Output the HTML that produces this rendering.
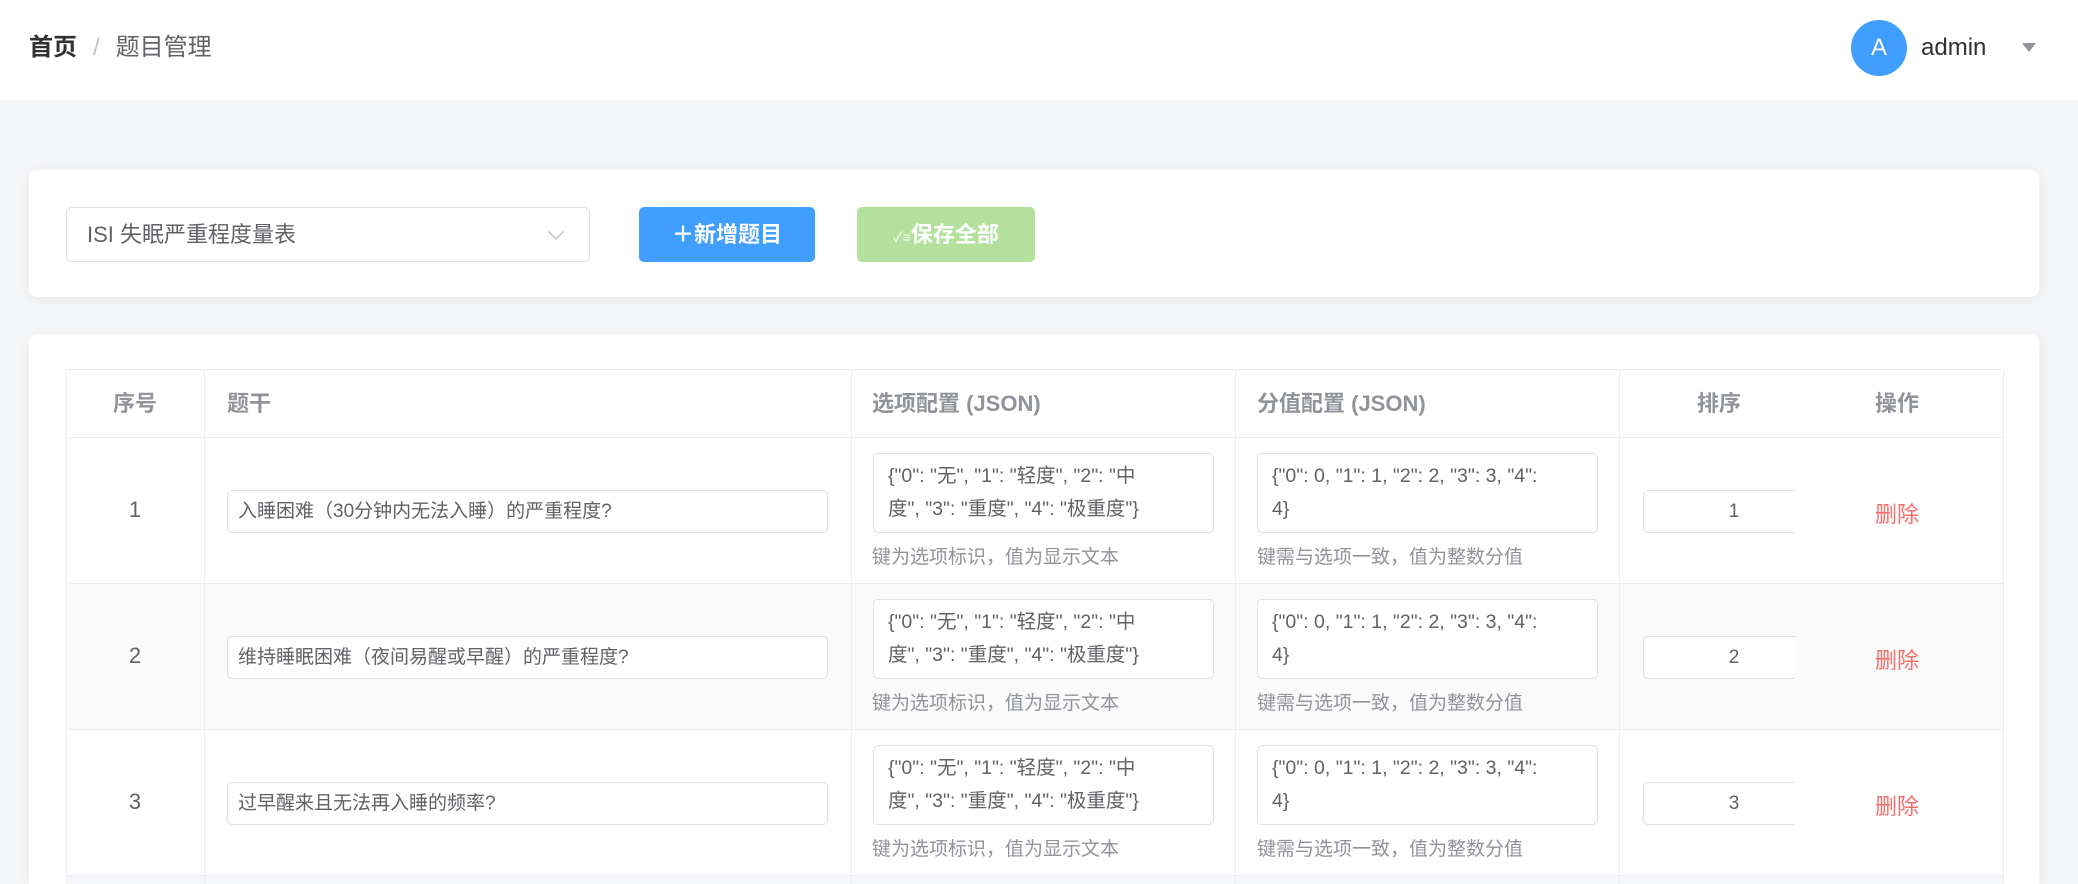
<!DOCTYPE html>
<html style="width:2078px;height:884px;overflow:hidden"><head><meta charset="utf-8"><style>
*{box-sizing:border-box;margin:0;padding:0}
body{width:2078px;height:884px;overflow:hidden;background:#f4f5f7;font-family:"Liberation Sans","Noto Sans CJK SC",sans-serif;color:#606266;position:relative}
.a{position:absolute}
.hdr{left:0;top:0;width:2078px;height:100px;background:#fff}
.card{background:#fff;border-radius:8px;box-shadow:0 2px 12px rgba(0,0,0,.06)}
.inp{position:absolute;border:1px solid #dcdfe6;border-radius:5px;background:#fff;font-size:19px;color:#606266}
.ta{padding:6px 14px;line-height:33px;font-size:19.5px;white-space:pre}
.hint{position:absolute;font-size:19px;color:#909399}
.th{position:absolute;top:370px;height:67px;line-height:67px;font-size:22px;font-weight:bold;color:#909399}
.vl{position:absolute;width:1px;background:#ebeef5;top:370px;height:514px}
.hl{position:absolute;height:1px;background:#ebeef5;left:66px;width:1938px}
.del{position:absolute;font-size:22px;color:#f56c6c;width:100px;text-align:center;left:1847px}
.num{position:absolute;font-size:22px;color:#606266;width:138px;text-align:center;left:66px}
</style></head><body>
<div class="a hdr"></div>
<div class="a" style="left:29px;top:32px;font-size:24px;line-height:32px"><b style="color:#303133">首页</b><span style="color:#c0c4cc;margin:0 16px">/</span><span style="color:#606266">题目管理</span></div>
<div class="a" style="left:1851px;top:20px;width:56px;height:56px;border-radius:50%;background:#409eff;color:#fff;font-size:24px;line-height:56px;text-align:center">A</div>
<div class="a" style="left:1921px;top:32px;font-size:24px;line-height:32px;color:#303133">admin</div>
<div class="a" style="left:2022px;top:43px;width:0;height:0;border-left:7px solid transparent;border-right:7px solid transparent;border-top:9px solid #909399"></div>

<div class="a card" style="left:29px;top:170px;width:2010px;height:127px"></div>
<div class="inp" style="left:66px;top:207px;width:524px;height:55px;line-height:53px;padding-left:20px;font-size:22px">ISI 失眠严重程度量表</div>
<svg class="a" style="left:546px;top:228px" width="20" height="14"><path d="M2 3 L10 11 L18 3" fill="none" stroke="#c0c4cc" stroke-width="1.5"/></svg>
<div class="a" style="left:639px;top:207px;width:176px;height:55px;background:#409eff;border-radius:5px;color:#fff;font-size:22px;font-weight:bold;line-height:55px;text-align:center">＋新增题目</div>
<div class="a" style="left:857px;top:207px;width:178px;height:55px;background:#b3e19d;border-radius:5px;color:#fff;font-size:22px;font-weight:bold;line-height:55px;text-align:center"><span style="font-size:14px;font-weight:normal">✓≡</span>保存全部</div>

<div class="a card" style="left:29px;top:334px;width:2010px;height:550px;border-radius:8px 8px 0 0"></div>
<div class="a" style="left:66px;top:369px;width:1938px;height:515px;border:1px solid #ebeef5;border-bottom:none"></div>
<div class="a" style="left:67px;top:583px;width:1936px;height:146px;background:#fafafa"></div>
<div class="a" style="left:67px;top:875px;width:1936px;height:9px;background:#f5f7fa"></div>
<div class="hl" style="top:437px"></div><div class="hl" style="top:583px"></div><div class="hl" style="top:729px"></div><div class="hl" style="top:875px"></div>
<div class="vl" style="left:204px"></div><div class="vl" style="left:851px"></div><div class="vl" style="left:1235px"></div><div class="vl" style="left:1619px"></div>
<div class="th" style="left:66px;width:138px;text-align:center">序号</div>
<div class="th" style="left:227px">题干</div>
<div class="th" style="left:872px">选项配置 (JSON)</div>
<div class="th" style="left:1257px">分值配置 (JSON)</div>
<div class="th" style="left:1619px;width:200px;text-align:center">排序</div>
<div class="th" style="left:1847px;width:100px;text-align:center">操作</div>

<div class="num" style="top:497px">1</div>
<div class="inp" style="left:227px;top:490px;width:601px;height:43px;line-height:41px;padding-left:10px">入睡困难（30分钟内无法入睡）的严重程度?</div>
<div class="inp ta" style="left:873px;top:453px;width:341px;height:80px">{"0": "无", "1": "轻度", "2": "中
度", "3": "重度", "4": "极重度"}</div>
<div class="hint" style="left:872px;top:542px">键为选项标识，值为显示文本</div>
<div class="inp ta" style="left:1257px;top:453px;width:341px;height:80px">{"0": 0, "1": 1, "2": 2, "3": 3, "4":
4}</div>
<div class="hint" style="left:1257px;top:542px">键需与选项一致，值为整数分值</div>
<div class="inp" style="left:1643px;top:490px;width:170px;height:43px;line-height:41px;clip-path:inset(0 18px 0 0)"><div style="width:180px;text-align:center">1</div></div>
<div class="del" style="top:497px">删除</div>

<div class="num" style="top:643px">2</div>
<div class="inp" style="left:227px;top:636px;width:601px;height:43px;line-height:41px;padding-left:10px">维持睡眠困难（夜间易醒或早醒）的严重程度?</div>
<div class="inp ta" style="left:873px;top:599px;width:341px;height:80px">{"0": "无", "1": "轻度", "2": "中
度", "3": "重度", "4": "极重度"}</div>
<div class="hint" style="left:872px;top:688px">键为选项标识，值为显示文本</div>
<div class="inp ta" style="left:1257px;top:599px;width:341px;height:80px">{"0": 0, "1": 1, "2": 2, "3": 3, "4":
4}</div>
<div class="hint" style="left:1257px;top:688px">键需与选项一致，值为整数分值</div>
<div class="inp" style="left:1643px;top:636px;width:170px;height:43px;line-height:41px;clip-path:inset(0 18px 0 0)"><div style="width:180px;text-align:center">2</div></div>
<div class="del" style="top:643px">删除</div>

<div class="num" style="top:789px">3</div>
<div class="inp" style="left:227px;top:782px;width:601px;height:43px;line-height:41px;padding-left:10px">过早醒来且无法再入睡的频率?</div>
<div class="inp ta" style="left:873px;top:745px;width:341px;height:80px">{"0": "无", "1": "轻度", "2": "中
度", "3": "重度", "4": "极重度"}</div>
<div class="hint" style="left:872px;top:834px">键为选项标识，值为显示文本</div>
<div class="inp ta" style="left:1257px;top:745px;width:341px;height:80px">{"0": 0, "1": 1, "2": 2, "3": 3, "4":
4}</div>
<div class="hint" style="left:1257px;top:834px">键需与选项一致，值为整数分值</div>
<div class="inp" style="left:1643px;top:782px;width:170px;height:43px;line-height:41px;clip-path:inset(0 18px 0 0)"><div style="width:180px;text-align:center">3</div></div>
<div class="del" style="top:789px">删除</div>
</body></html>
